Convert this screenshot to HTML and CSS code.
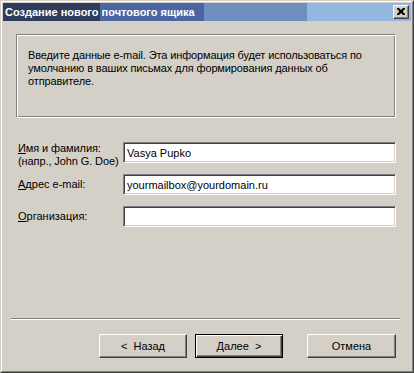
FILE: index.html
```html
<!DOCTYPE html>
<html lang="ru">
<head>
  <meta charset="UTF-8">
  <meta name="viewport" content="width=device-width, initial-scale=1.0">
  <title>Создание нового почтового ящика</title>
  <link rel="stylesheet" href="styles.css">
</head>
<body>
  <div class="window">
    <div class="window-inner">
      <div class="title-bar">
        <span class="title-text">Создание нового почтового ящика</span>
        <button class="close-btn" type="button" aria-label="Закрыть">
          <svg width="8" height="7" viewBox="0 0 8 7">
            <path d="M0 0h2l2 2 2-2h2v1l-2 2v1l2 2v1h-2l-2-2-2 2h-2v-1l2-2v-1l-2-2z" fill="#000"/>
          </svg>
        </button>
      </div>

      <div class="content">
        <div class="info-box">
          Введите данные e-mail. Эта информация будет использоваться по
          умолчанию в ваших письмах для формирования данных об
          отправителе.
        </div>

        <form class="mail-form">
          <div class="form-row form-row-tall">
            <label for="fullName"><u>И</u>мя и фамилия:<br>(напр., John G. Doe)</label>
            <input type="text" id="fullName" value="Vasya Pupko">
          </div>
          <div class="form-row">
            <label for="email"><u>А</u>дрес e-mail:</label>
            <input type="text" id="email" value="yourmailbox@yourdomain.ru">
          </div>
          <div class="form-row">
            <label for="org"><u>О</u>рганизация:</label>
            <input type="text" id="org" value="">
          </div>
        </form>

        <div class="separator"></div>

        <div class="button-group">
          <button type="button" class="btn">&lt;&nbsp;&nbsp;Назад</button>
          <button type="button" class="btn btn-default">Далее&nbsp;&nbsp;&gt;</button>
          <button type="button" class="btn btn-cancel">Отмена</button>
        </div>
      </div>
    </div>
  </div>
</body>
</html>
```

FILE: styles.css
```css
* {
  margin: 0;
  padding: 0;
  box-sizing: border-box;
}

body {
  width: 414px;
  height: 373px;
  background: #d4d0c8;
  font-family: 'Liberation Sans', Arial, sans-serif;
  font-size: 11px;
  color: #000;
  overflow: hidden;
}

.window {
  width: 414px;
  height: 373px;
  border: 1px solid;
  border-color: #d4d0c8 #404040 #404040 #d4d0c8;
}

.window-inner {
  height: 100%;
  border: 1px solid;
  border-color: #fff #808080 #808080 #fff;
  padding: 1px;
  display: flex;
  flex-direction: column;
}

.title-bar {
  height: 18px;
  display: flex;
  align-items: center;
  justify-content: space-between;
  padding: 0 2px;
  background: linear-gradient(90deg,
    #2f3b5b 0, #2f3b5b 97px,
    #4a66a2 97px, #4a66a2 201px,
    #6f8fc1 201px, #6f8fc1 304px,
    #94b7e1 304px);
}

.title-text {
  color: #fff;
  font-weight: 700;
  font-size: 11px;
  white-space: nowrap;
}

.close-btn {
  width: 16px;
  height: 14px;
  background: #d4d0c8;
  border: 1px solid;
  border-color: #fff #404040 #404040 #fff;
  box-shadow: inset -1px -1px 0 #808080;
  display: flex;
  align-items: center;
  justify-content: center;
  padding: 0 0 1px 0;
}

.close-btn svg {
  display: block;
}

.content {
  flex: 1;
  display: flex;
  flex-direction: column;
  padding-top: 13px;
}

.info-box {
  margin-left: 13px;
  width: 380px;
  height: 84px;
  border: 1px solid;
  border-color: #808080 #fff #fff #808080;
  box-shadow: inset 1px 1px 0 #fff, inset -1px -1px 0 #808080;
  padding: 14px 10px 0 11px;
  line-height: 13px;
  letter-spacing: -0.12px;
}

.mail-form {
  margin-top: 24px;
  display: flex;
  flex-direction: column;
  gap: 11px;
}

.form-row {
  height: 21px;
  display: flex;
  align-items: center;
  padding-left: 15px;
}

.form-row label {
  width: 105px;
  line-height: 13px;
  white-space: nowrap;
}

.form-row-tall label {
  margin-top: 4px;
  letter-spacing: -0.1px;
}

.form-row input {
  width: 273px;
  height: 21px;
  border: 1px solid;
  border-color: #808080 #fff #fff #808080;
  box-shadow: inset 1px 1px 0 #404040, inset -1px -1px 0 #d4d0c8;
  background: #fff;
  padding: 0 3px;
  font-family: 'Liberation Sans', Arial, sans-serif;
  font-size: 11px;
  color: #000;
  outline: none;
}

.separator {
  margin: 91px 0 0 8px;
  width: 389px;
  height: 2px;
  border-top: 1px solid #808080;
  border-bottom: 1px solid #fff;
}

.button-group {
  display: flex;
  margin: 14px 0 0 96px;
  gap: 8px;
}

.btn {
  width: 88px;
  height: 24px;
  background: #d4d0c8;
  border: 1px solid;
  border-color: #fff #404040 #404040 #fff;
  box-shadow: inset -1px -1px 0 #808080;
  font-family: 'Liberation Sans', Arial, sans-serif;
  font-size: 11px;
  color: #000;
}

.btn-default {
  border: 1px solid #000;
  box-shadow: inset 1px 1px 0 #fff, inset -1px -1px 0 #404040, inset -2px -2px 0 #808080;
}

.btn-cancel {
  width: 89px;
  margin-left: 16px;
}
```
